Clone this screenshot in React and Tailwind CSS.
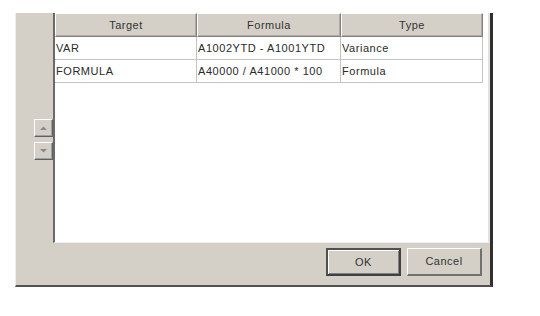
import React from "react";

const font = { fontFamily: '"Liberation Sans", Arial, sans-serif' };

function HeaderCell({ w, children }) {
  return (
    <div
      className={`${w} h-[24px] flex items-center justify-center bg-[#d4d0c8] border-t border-l border-t-white border-l-white border-r border-b border-r-[#808080] border-b-[#808080] shadow-[inset_-1px_-1px_0_#b0aca4] text-[11px] text-[#333] tracking-[0.5px]`}
    >
      {children}
    </div>
  );
}

function Cell({ w, children }) {
  return (
    <div className={`${w} h-[23px] flex items-center pl-[1px] border-r border-b border-[#c4c4c4] text-[11px] text-[#2a2a2a] tracking-[0.55px] whitespace-nowrap overflow-hidden`}>
      {children}
    </div>
  );
}

function SmallBtn({ up }) {
  return (
    <div className="w-[19px] h-[18px] flex items-center justify-center bg-[#d4d0c8] border-t border-l border-t-white border-l-white border-r border-b border-r-[#606060] border-b-[#606060] shadow-[inset_-1px_-1px_0_#a0a0a0]">
      <svg width="7" height="4" viewBox="0 0 7 4">
        {up ? (
          <polygon points="0,4 7,4 3.5,0.5" fill="#8a8a8a" />
        ) : (
          <polygon points="0,0 7,0 3.5,3.5" fill="#8a8a8a" />
        )}
      </svg>
    </div>
  );
}

function Btn({ children, def }) {
  return (
    <div
      className={`w-[75px] h-[28px] flex items-center justify-center bg-[#d4d0c8] text-[11px] text-[#333] tracking-[0.5px] ${
        def
          ? "border-2 border-t-[#505050] border-l-[#505050] border-r-[#404040] border-b-[#404040] shadow-[inset_1px_1px_0_#ffffff,inset_-1px_-1px_0_#808080]"
          : "border-t border-l border-t-white border-l-white border-r-2 border-b-2 border-r-[#707070] border-b-[#707070]"
      }`}
    >
      {children}
    </div>
  );
}

export default function App() {
  return (
    <div className="w-[540px] h-[316px] bg-white pt-[13px] pl-[15px]" style={font}>
      <div className="w-[478px] h-[274px] bg-[#d4d0c8] border-l border-l-[#eeeeee] border-r-[3px] border-r-[#303030] border-b-2 border-b-[#505050] flex flex-col">
        <div className="flex h-[230px]">
          <div className="w-[37px] flex flex-col items-end pt-[106px] gap-[5px]">
            <SmallBtn up />
            <SmallBtn />
          </div>
          <div className="flex-1 bg-white border-l-2 border-l-[#6a6a6a] border-r-2 border-r-[#e4e2dc] border-b border-b-[#eeeeee] flex flex-col">
            <div className="flex">
              <HeaderCell w="w-[142px]">Target</HeaderCell>
              <HeaderCell w="w-[144px]">Formula</HeaderCell>
              <HeaderCell w="w-[142px]">Type</HeaderCell>
            </div>
            <div className="flex">
              <Cell w="w-[142px]">VAR</Cell>
              <Cell w="w-[144px]">A1002YTD - A1001YTD</Cell>
              <Cell w="w-[142px]">Variance</Cell>
            </div>
            <div className="flex">
              <Cell w="w-[142px]">FORMULA</Cell>
              <Cell w="w-[144px]">A40000 / A41000 * 100</Cell>
              <Cell w="w-[142px]">Formula</Cell>
            </div>
          </div>
        </div>
        <div className="flex justify-end gap-[6px] pt-[5px] pr-[8px]">
          <Btn def>OK</Btn>
          <Btn>Cancel</Btn>
        </div>
      </div>
    </div>
  );
}
